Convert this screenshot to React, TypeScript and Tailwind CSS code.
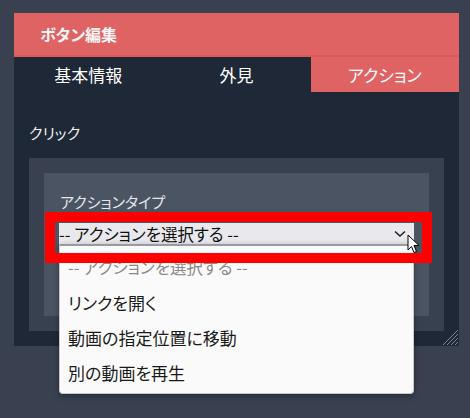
import React from "react";

const tabs = ["基本情報", "外見", "アクション"];
const options = ["リンクを開く", "動画の指定位置に移動", "別の動画を再生"];

const App = () => {
  return (
    <div className="relative min-h-screen bg-[#394150] pt-[13px] pl-[14px] font-['Noto_Sans_CJK_JP',sans-serif] [font-feature-settings:'palt']">
      <div className="relative w-[445px] bg-[#1f2836]">
        <div className="flex h-[44px] items-center border-b-2 border-[#d95a5b] bg-[#e06364] pl-[26px] text-[16px] font-bold text-[#f5f5f5]">
          ボタン編集
        </div>
        <div className="grid h-[35px] grid-cols-3 text-[17px] text-white">
          {tabs.map((t, i) => (
            <div
              key={t}
              className={
                i === 2
                  ? "flex items-center justify-center bg-[#e06364]"
                  : "flex items-center justify-center"
              }
            >
              {t}
            </div>
          ))}
        </div>

        <div className="px-[15px] pb-[15px]">
          <div className="pt-[30px] pb-[14px] text-[15px] leading-[22px] text-[#f0f0f0]">
            クリック
          </div>
          <div className="bg-[#394150] p-[15px]">
            <div className="h-[143px] bg-[#4b5462] px-[15px] pt-[18px]">
              <div className="pl-px text-[15px] leading-[22px] text-[#e5e7eb]">
                アクションタイプ
              </div>
              <div className="relative mt-[10px]">
                <div className="flex h-[22px] items-center justify-between bg-[#e9e9ed] text-[16.5px] leading-[22px] text-[#111]">
                  <span>-- アクションを選択する --</span>
                  <svg width="12" height="8" viewBox="0 0 12 8" className="mr-[8px]">
                    <polyline points="1,1.5 6,6 11,1.5" fill="none" stroke="#222" strokeWidth="1.6" />
                  </svg>
                </div>
                {/* 開いたドロップダウン */}
                <div className="absolute left-0 right-0 top-[21px] z-10 h-[150px] rounded-b-[4px] border border-t-2 border-[#c8c8cc] border-t-[#9a9aa2] bg-[#fafafa] pt-[4px] shadow-[0_2px_6px_rgba(0,0,0,0.35)]">
                  <div className="flex h-[35px] items-center pl-[8px] text-[16.5px] text-[#8a8a8a]">
                    -- アクションを選択する --
                  </div>
                  {options.map((o) => (
                    <div key={o} className="flex h-[35px] items-center pl-[8px] text-[17px] text-[#1a1a1a]">
                      {o}
                    </div>
                  ))}
                </div>
              </div>
            </div>
          </div>
        </div>

        <svg width="18" height="18" viewBox="0 0 18 18" className="absolute right-0 bottom-0">
          <line x1="2" y1="17" x2="17" y2="2" stroke="#7b8494" strokeWidth="1" />
          <line x1="6" y1="17" x2="17" y2="6" stroke="#7b8494" strokeWidth="1" />
          <line x1="10" y1="17" x2="17" y2="10" stroke="#7b8494" strokeWidth="1" />
          <line x1="14" y1="17" x2="17" y2="14" stroke="#7b8494" strokeWidth="1" />
        </svg>
      </div>

      {/* マウスカーソル */}
      <svg width="14" height="21" viewBox="0 0 14 21" className="absolute left-[407px] top-[234px] z-20">
        <path d="M1 1 L1 16 L4.5 12.5 L7 18.5 L9.5 17.5 L7 11.5 L12 11.5 Z" fill="#fff" stroke="#000" strokeWidth="1" strokeLinejoin="round" />
      </svg>

      {/* 赤い強調枠 */}
      <div className="absolute left-[45px] top-[212px] z-30 h-[51px] w-[387px] border-[10px] border-[#ff0000]" />
    </div>
  );
};

export default App;
